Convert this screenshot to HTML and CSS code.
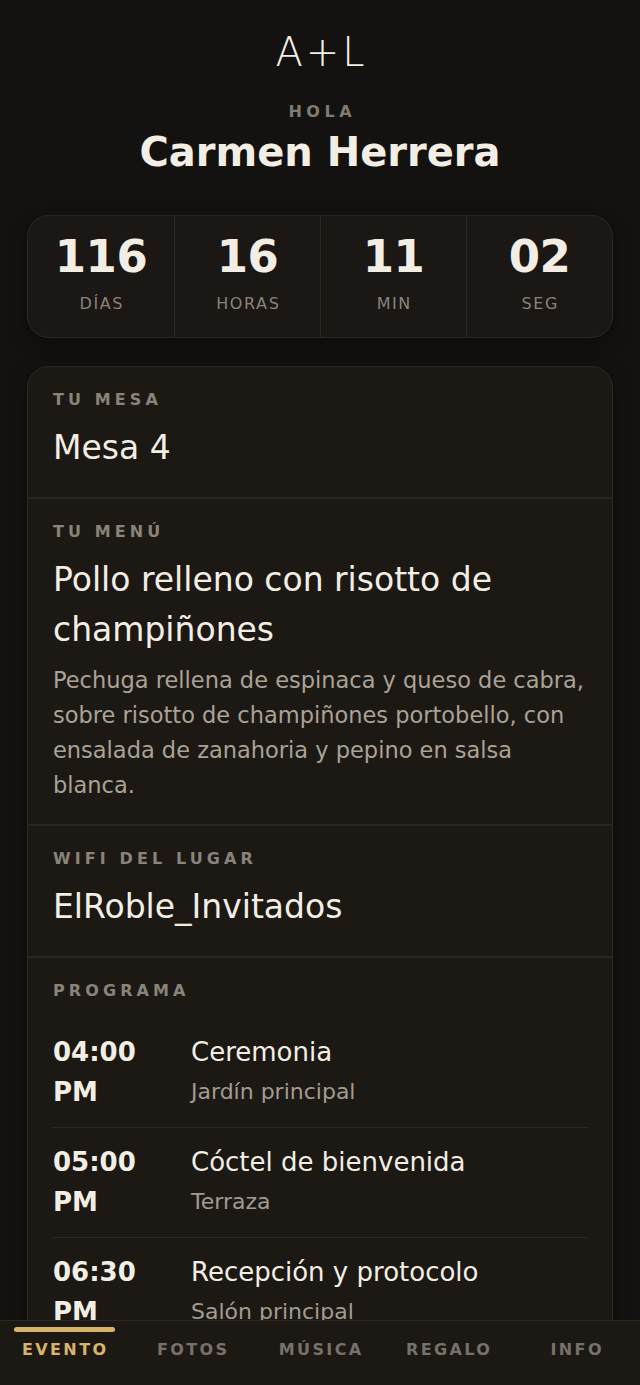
FILE: index.html
```html
<!DOCTYPE html>
<html lang="es">
<head>
<meta charset="utf-8">
<meta name="viewport" content="width=device-width, initial-scale=1">
<title>A+L</title>
<link rel="stylesheet" href="styles.css">
</head>
<body>
<div class="app">
  <main class="content">
    <header class="header">
      <div class="logo">A+L</div>
      <div class="hola">HOLA</div>
      <h1 class="name">Carmen Herrera</h1>
    </header>

    <section class="countdown">
      <div class="cd-cell"><div class="cd-num">116</div><div class="cd-label">DÍAS</div></div>
      <div class="cd-cell"><div class="cd-num">16</div><div class="cd-label">HORAS</div></div>
      <div class="cd-cell"><div class="cd-num">11</div><div class="cd-label">MIN</div></div>
      <div class="cd-cell"><div class="cd-num">02</div><div class="cd-label">SEG</div></div>
    </section>

    <section class="card">
      <div class="block">
        <div class="label">TU MESA</div>
        <div class="value">Mesa 4</div>
      </div>
      <div class="block block-menu">
        <div class="label">TU MENÚ</div>
        <div class="value value-multi">Pollo relleno con risotto de champiñones</div>
        <p class="desc">Pechuga rellena de espinaca y queso de cabra, sobre risotto de champiñones portobello, con ensalada de zanahoria y pepino en salsa blanca.</p>
      </div>
      <div class="block">
        <div class="label">WIFI DEL LUGAR</div>
        <div class="value">ElRoble_Invitados</div>
      </div>
      <div class="block block-program">
        <div class="label">PROGRAMA</div>
        <ul class="program">
          <li class="row">
            <div class="time">04:00 PM</div>
            <div class="event"><div class="ev-title">Ceremonia</div><div class="ev-place">Jardín principal</div></div>
          </li>
          <li class="row">
            <div class="time">05:00 PM</div>
            <div class="event"><div class="ev-title">Cóctel de bienvenida</div><div class="ev-place">Terraza</div></div>
          </li>
          <li class="row">
            <div class="time">06:30 PM</div>
            <div class="event"><div class="ev-title">Recepción y protocolo</div><div class="ev-place">Salón principal</div></div>
          </li>
        </ul>
      </div>
    </section>
  </main>

  <nav class="tabbar">
    <a class="tab active"><span class="tab-bar"></span><span class="tab-label">EVENTO</span></a>
    <a class="tab"><span class="tab-bar"></span><span class="tab-label">FOTOS</span></a>
    <a class="tab"><span class="tab-bar"></span><span class="tab-label">MÚSICA</span></a>
    <a class="tab"><span class="tab-bar"></span><span class="tab-label">REGALO</span></a>
    <a class="tab"><span class="tab-bar"></span><span class="tab-label">INFO</span></a>
  </nav>
</div>
</body>
</html>
```

FILE: styles.css
```css
* { box-sizing: border-box; }
html, body { margin: 0; padding: 0; height: 100%; }
body {
  background: #141210;
  color: #f3eee4;
  font-family: "DejaVu Sans", "Liberation Sans", sans-serif;
}
.app {
  height: 100vh;
  display: flex;
  flex-direction: column;
  overflow: hidden;
}
.content {
  flex: 1 1 auto;
  min-height: 0;
  overflow-y: auto;
  scrollbar-width: none;
  padding: 28px 27px 40px;
}
.content::-webkit-scrollbar { display: none; }

.header { text-align: center; }
.logo {
  font-size: 40px;
  font-weight: 200;
  line-height: 48px;
  letter-spacing: 3px;
  padding-left: 3px;
}
.hola {
  margin-top: 26px;
  font-size: 16px;
  line-height: 20px;
  font-weight: 700;
  letter-spacing: 4.5px;
  padding-left: 4.5px;
  color: #817a70;
}
.name {
  margin: 6px 0 0;
  font-size: 40px;
  line-height: 48px;
  font-weight: 700;
}

.countdown {
  margin-top: 39px;
  display: grid;
  grid-template-columns: repeat(4, 1fr);
  background: #1a1714;
  border: 1px solid #2c2823;
  border-radius: 22px;
  box-shadow: 0 8px 20px rgba(0,0,0,0.35);
  overflow: hidden;
}
.cd-cell {
  text-align: center;
  padding: 16px 0 23px;
}
.cd-cell + .cd-cell { border-left: 1px solid #2c2823; }
.cd-num {
  font-size: 45px;
  line-height: 50px;
  font-weight: 700;
  letter-spacing: -0.5px;
}
.cd-label {
  margin-top: 12px;
  font-size: 16px;
  line-height: 20px;
  letter-spacing: 1.6px;
  padding-left: 1.6px;
  color: #8a8379;
}

.card {
  margin-top: 28px;
  background: #1c1915;
  border: 1px solid #2c2823;
  border-radius: 22px;
  box-shadow: 0 8px 22px rgba(0,0,0,0.35);
}
.block {
  padding: 23px 25px 25px;
}
.block + .block { border-top: 2px solid #2a2621; }
.block-menu { padding-bottom: 21px; }
.label {
  font-size: 16px;
  line-height: 20px;
  font-weight: 700;
  letter-spacing: 4.1px;
  color: #8a8379;
}
.value {
  margin-top: 14px;
  font-size: 33px;
  line-height: 48px;
}
.value-multi { line-height: 50px; margin-top: 13px; }
.desc {
  margin: 8px 0 0;
  font-size: 22.5px;
  line-height: 35px;
  color: #aaa296;
}
.block-program { padding-bottom: 10px; }
.program {
  list-style: none;
  margin: 17px 0 0;
  padding: 0;
}
.row {
  display: flex;
  gap: 28px;
  padding: 14px 0 15px;
  border-bottom: 1px solid #2c2823;
}
.row:last-child { border-bottom: 0; }
.time {
  flex: 0 0 110px;
  font-size: 26px;
  line-height: 40px;
  font-weight: 700;
}
.event { flex: 1; }
.ev-title {
  font-size: 26px;
  line-height: 40px;
}
.ev-place {
  font-size: 22px;
  line-height: 40px;
  color: #a39b90;
}

.tabbar {
  flex: 0 0 65px;
  display: grid;
  grid-template-columns: repeat(5, 1fr);
  background: #1c1915;
  border-top: 1px solid #2c2823;
}
.tab {
  display: flex;
  flex-direction: column;
  align-items: center;
  color: #77716a;
  text-decoration: none;
}
.tab-bar {
  display: block;
  width: 101px;
  height: 5px;
  margin-top: 6px;
  border-radius: 3px;
  background: transparent;
}
.tab-label {
  margin-top: 8px;
  font-size: 16px;
  line-height: 20px;
  font-weight: 700;
  letter-spacing: 2.4px;
  padding-left: 2.4px;
}
.tab.active { color: #d8b46b; }
.tab.active .tab-bar { background: #d8b46b; }
```
